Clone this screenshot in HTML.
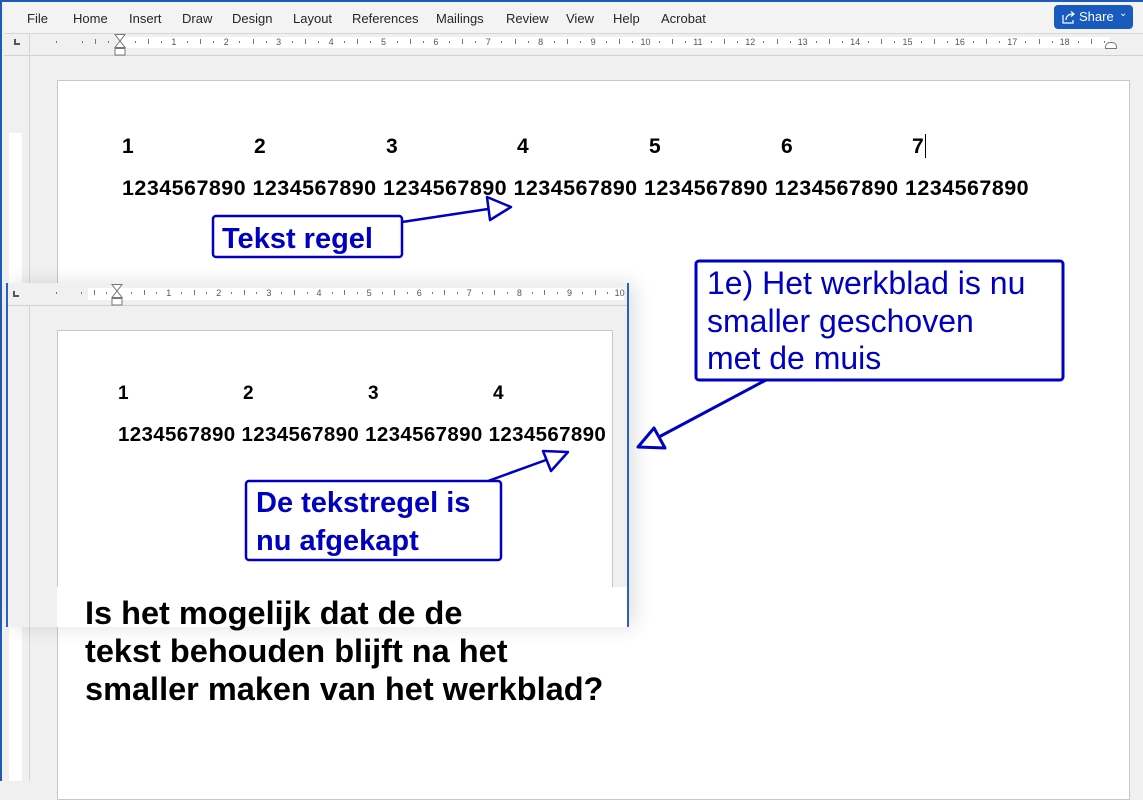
<!DOCTYPE html>
<html><head><meta charset="utf-8">
<style>
*{margin:0;padding:0;box-sizing:border-box}
body{width:1143px;height:781px;overflow:hidden;background:#f0f0f0;font-family:"Liberation Sans",Arial,sans-serif;position:relative}
.abs{position:absolute}
.menu{left:0;top:0;width:1143px;height:34px;background:#f3f3f3;border-top:2px solid #1e5bb8;border-bottom:1px solid #d6d6d6}
.menu span{position:absolute;top:9px;font-size:13px;color:#262626}
.share{left:1054px;top:5px;width:79px;height:24px;background:#185abd;border-radius:4px;color:#fff;font-size:13px}
.ruler{background:#f0f0f0;border-bottom:1px solid #d0d0d0}
.strip{background:#fff}
.rn{position:absolute;font-size:9px;color:#555;transform:translateX(-50%)}
.tk{position:absolute;width:1px;background:#777}
.page{background:#fff;border:1px solid #c8c8c8}
.b{font-weight:bold}
</style></head><body>

<div class="abs menu">
<span style="left:27px">File</span><span style="left:73px">Home</span><span style="left:129px">Insert</span><span style="left:182px">Draw</span><span style="left:232px">Design</span><span style="left:293px">Layout</span><span style="left:352px">References</span><span style="left:436px">Mailings</span><span style="left:506px">Review</span><span style="left:566px">View</span><span style="left:613px">Help</span><span style="left:661px">Acrobat</span>
</div>
<div class="abs share">
<svg class="abs" style="left:8px;top:5px" width="14" height="14" viewBox="0 0 14 14" fill="none" stroke="#fff" stroke-width="1.2"><path d="M1 5v8h10v-3"/><path d="M4 10c0-4 3-6 7-6"/><path d="M9 1.5l3 2.5-3 2.5"/></svg>
<span class="abs" style="left:25px;top:4px">Share</span>
<span class="abs" style="left:65px;top:3px;font-size:10px">&#8964;</span>
</div>
<div class="abs" style="left:0;top:2px;width:4px;height:779px;background:#f0f0f0;border-left:2px solid #1e5bb8"></div>

<div class="abs ruler" style="left:4px;top:34px;width:1139px;height:22px"></div>
<div class="abs strip" style="left:120px;top:37px;width:990px;height:11px"></div>
<div class="abs" style="left:14px;top:39px;width:6px;height:6px;border-left:2px solid #555;border-bottom:2px solid #555"></div>
<div class="abs" style="left:29px;top:34px;width:1px;height:747px;background:#d4d4d4"></div>
<div id="r1"></div>
<svg class="abs" style="left:114px;top:34px" width="12" height="22" viewBox="0 0 12 22" fill="#fff" stroke="#777"><path d="M1 .5h10L6 7z"/><path d="M6 7L1 13.5h10z"/><rect x="1" y="14.5" width="10" height="6.5"/></svg>
<div class="abs" style="left:1105px;top:42px;width:12px;height:7px;border:1px solid #777;border-radius:5px 5px 0 0;background:#fff"></div>
<div class="abs strip" style="left:9px;top:133px;width:13px;height:150px"></div>
<div class="abs strip" style="left:9px;top:627px;width:13px;height:154px"></div>
<div class="abs page" style="left:57px;top:80px;width:1073px;height:720px"></div>

<div class="abs b" style="left:122px;top:135px;font-size:21px;width:900px">
<span class="abs" style="left:0">1</span><span class="abs" style="left:132px">2</span><span class="abs" style="left:264px">3</span><span class="abs" style="left:395px">4</span><span class="abs" style="left:527px">5</span><span class="abs" style="left:659px">6</span><span class="abs" style="left:790px">7</span>
</div>
<div class="abs" style="left:925px;top:134px;width:1px;height:24px;background:#000"></div>
<div class="abs b" style="left:122px;top:176px;font-size:21.5px;white-space:nowrap;letter-spacing:0.45px">1234567890 1234567890 1234567890 1234567890 1234567890 1234567890 1234567890</div>

<div class="abs" style="left:6px;top:283px;width:623px;height:344px;background:#f0f0f0;border-left:2px solid #2b5fc0;border-right:2px solid #2b5fc0;box-shadow:6px 0 18px rgba(0,0,0,0.12)"></div>
<div class="abs ruler" style="left:8px;top:283px;width:619px;height:23px"></div>
<div class="abs strip" style="left:88px;top:288px;width:536px;height:12px"></div>
<div class="abs" style="left:13px;top:291px;width:6px;height:6px;border-left:2px solid #555;border-bottom:2px solid #555"></div>
<div class="abs" style="left:29px;top:306px;width:1px;height:321px;background:#d4d4d4"></div>
<div id="r2"></div>
<svg class="abs" style="left:111px;top:284px" width="12" height="22" viewBox="0 0 12 22" fill="#fff" stroke="#777"><path d="M1 .5h10L6 7z"/><path d="M6 7L1 13.5h10z"/><rect x="1" y="14.5" width="10" height="6.5"/></svg>
<div class="abs page" style="left:57px;top:330px;width:556px;height:297px;border-bottom:none"></div>
<div class="abs" style="left:57px;top:587px;width:570px;height:40px;background:#fff"></div>
<div class="abs b" style="left:118px;top:383px;font-size:19px">
<span class="abs" style="left:0">1</span><span class="abs" style="left:125px">2</span><span class="abs" style="left:250px">3</span><span class="abs" style="left:375px">4</span>
</div>
<div class="abs b" style="left:118px;top:423px;font-size:20.5px;white-space:nowrap;letter-spacing:0.35px;width:494px;overflow:hidden">1234567890 1234567890 1234567890 1234567890</div>

<div class="abs b" style="left:85px;top:594px;font-size:32.5px;line-height:38px;color:#000">Is het mogelijk dat de de<br>tekst behouden blijft na het<br>smaller maken van het werkblad?</div>

<svg class="abs" style="left:0;top:0" width="1143" height="781">
<g fill="#fff" stroke="#0000c0" stroke-width="2.5" stroke-linejoin="round">
<rect x="213" y="216" width="189" height="41" rx="3"/>
<line x1="402" y1="222" x2="488" y2="209"/>
<polygon points="487,197 511,207 490,220"/>
<rect x="696" y="261" width="367" height="119" rx="3" stroke-width="3"/>
<line x1="766" y1="380" x2="657" y2="438" stroke-width="3"/>
<polygon points="638,447 654,428 665,448" stroke-width="3"/>
<rect x="246" y="481" width="255" height="79" rx="3"/>
<line x1="488" y1="481" x2="546" y2="460"/>
<polygon points="543,451 568,452 551,471"/>
</g>
<g fill="#0000c0" font-family="Liberation Sans, Arial, sans-serif">
<text x="222" y="248" font-size="29" font-weight="bold">Tekst regel</text>
<text x="707" y="294" font-size="32">1e) Het werkblad is nu</text>
<text x="707" y="332" font-size="32">smaller geschoven</text>
<text x="707" y="369" font-size="32">met de muis</text>
<text x="256" y="512" font-size="29" font-weight="bold">De tekstregel is</text>
<text x="256" y="550" font-size="29" font-weight="bold">nu afgekapt</text>
</g>
</svg>

<script>
function ruler(id,y,x1,sp,n,start,end){
 var h='';
 for(var x=start;x<end;x+=sp/4){
  var k=Math.round((x-x1)/(sp/4));var m=((k%4)+4)%4;
  if(m==0){var v=Math.round((x-x1)/sp); if(v>0&&v<=n) h+='<div class="rn" style="left:'+x+'px;top:'+(y-1)+'px">'+v+'</div>';}
  else if(m==2) h+='<div class="tk" style="left:'+x+'px;top:'+(y+1)+'px;height:5px"></div>';
  else h+='<div class="tk" style="left:'+x+'px;top:'+(y+3)+'px;height:2px"></div>';
 }
 document.getElementById(id).innerHTML=h;
}
ruler('r1',38,121,52.4,18,56,1130);
ruler('r2',289,116,50.1,10,56,625);
</script>
</body></html>
